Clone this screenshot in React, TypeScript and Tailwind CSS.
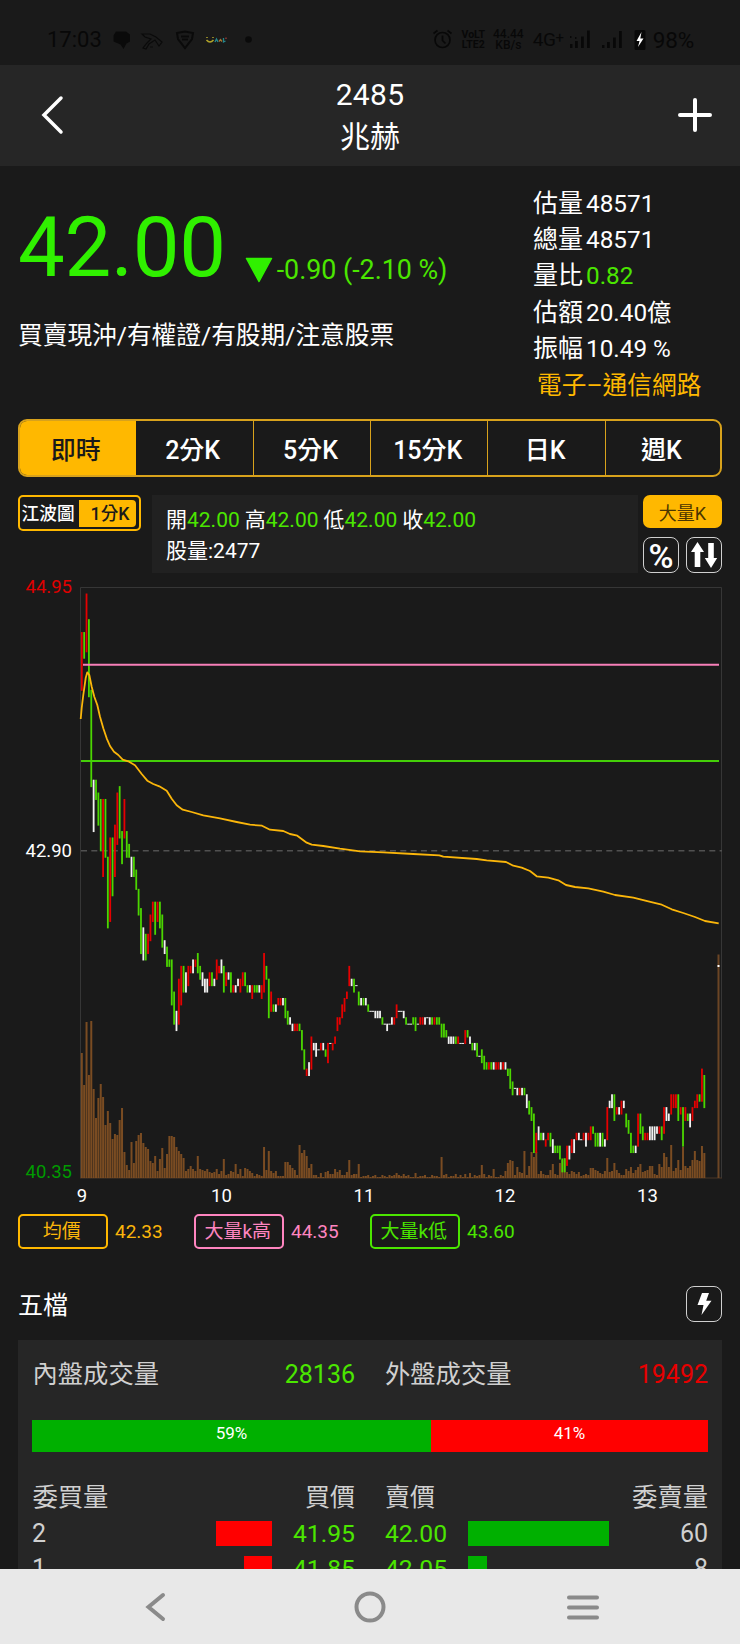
import React from "react";

const FONT = "font-['Roboto','Noto_Sans_CJK_TC',sans-serif]";

/* One entry per minute: colour, high tick and low tick below 44.95 (one tick = 0.05). */
const CANDLES = `
r7-16 g7-11 r1-10 g5-17 g16-31 w30-38 g30-33 g32-37 g33-41 r33-45
g33-42 g42-53 r39-52 g39-48 r37-45 r32-40 g31-39 g38-43 r33-39 g38-42
g40-42 w42-45 g42-45 g44-47 g47-51 g50-57 w53-58 g54-58 r54-57 r51-55
r49-52 g49-54 r49-52 g49-53 g51-56 w55-57 g56-59 g58-59 g58-65 g63-68
w66-69 r61-68 r59-65 g59-63 w60-63 r59-62 r59-60 w58-60 r58-59 g57-60
g59-61 w60-62 w61-63 w61-63 r60-62 g60-62 w61-62 r58-61 r59-60 w58-60
g59-63 r60-62 w60-61 g60-63 r62-63 w62-63 w61-62 r61-63 r60-62 g60-62
g62-63 w62-63 r62-64 g62-63 g62-63 w62-63 r62-64 r57-63 g59-61 g61-67
r63-66 g65-66 w65-66 r64-65 r64-65 w64-65 g64-67 g66-68 w67-68 w68-69
r68-69 r68-69 g68-69 g69-72 g72-75 r75-76 w74-76 r70-75 w71-72 w71-73
w72-72 r71-72 w71-72 g72-73 r71-74 w71-71 r71-72 r70-71 r67-69 r67-68
r65-67 r64-66 r63-64 r59-62 w61-62 g61-63 w62-62 g63-65 w64-65 g64-65
w64-65 g65-66 w66-66 w66-66 w66-67 w66-67 w66-67 g67-68 w68-68 w68-69
w68-68 w67-68 r67-68 r65-67 w66-66 w66-66 w66-67 g67-68 w68-68 w68-68
g67-68 g67-69 w68-68 r67-68 r67-68 w67-68 w67-67 w67-68 g67-68 r67-68
g67-68 g67-68 g68-70 g68-70 g69-70 w70-71 w70-71 w70-71 g70-71 r70-71
w71-71 w71-71 r69-71 g69-70 w70-71 g71-72 w71-72 g71-73 w73-73 g72-74
g73-75 g74-75 r74-75 g74-75 w74-75 r74-75 r74-75 w74-75 r74-75 w74-75
g75-76 g75-78 g77-79 w78-78 w78-79 r78-79 w78-79 g78-79 w79-81 g80-82
g81-83 g82-88 r85-88 w84-86 g85-86 w85-86 r86-87 r85-86 g85-87 w86-88
g87-88 g87-88 g87-89 g89-91 g89-91 r87-90 w87-89 r86-88 w86-88 r85-86
w85-86 w86-86 r85-86 w85-87 r85-86 r84-86 g84-85 g85-87 g85-87 w85-87
g85-87 w86-87 r81-86 w80-81 w79-81 g79-83 r81-82 w81-82 r80-82 w80-81
g82-84 g83-85 g85-88 g87-88 w87-88 r82-87 g82-85 g84-86 r85-86 r85-86
w84-86 w84-86 w84-86 w84-85 r84-85 g84-86 r81-85 w81-83 w82-83 r79-82
r79-81 r79-81 g79-83 r81-82 g81-87 r81-83 g82-83 w82-84 r81-83 r80-81
r79-81 g79-80 r75-80 g76-81`
  .trim()
  .split(/\s+/)
  .map((s) => {
    const [hi, lo] = s.slice(1).split("-").map(Number);
    return { tone: s[0], hi, lo };
  });

const VOLUMES = [
  125, 93, 156, 103, 157, 89, 60, 80, 94, 81, 53, 67, 55, 39, 44, 43, 58, 70, 26, 13,
  8, 36, 15, 37, 43, 45, 35, 31, 29, 17, 15, 22, 7, 19, 30, 10, 24, 42, 42, 41,
  31, 27, 24, 20, 7, 9, 12, 9, 7, 22, 9, 8, 7, 9, 6, 5, 6, 9, 4, 7,
  19, 3, 4, 7, 6, 14, 4, 9, 2, 10, 9, 7, 5, 2, 4, 3, 2, 31, 8, 27,
  7, 5, 7, 2, 2, 2, 16, 16, 13, 10, 8, 3, 33, 25, 28, 22, 10, 14, 3, 3,
  1, 5, 1, 6, 7, 4, 4, 9, 6, 8, 3, 3, 6, 18, 3, 4, 4, 14, 1, 2,
  2, 3, 1, 2, 3, 1, 1, 3, 2, 1, 3, 2, 3, 5, 3, 2, 4, 2, 3, 1,
  1, 5, 1, 2, 2, 3, 1, 1, 3, 2, 2, 1, 21, 3, 4, 1, 2, 2, 4, 1,
  3, 1, 4, 1, 5, 1, 3, 2, 3, 13, 4, 1, 3, 2, 9, 1, 1, 3, 2, 7,
  15, 18, 17, 3, 11, 6, 5, 27, 3, 12, 26, 21, 26, 4, 7, 4, 3, 3, 8, 14,
  4, 3, 15, 18, 20, 6, 4, 7, 6, 4, 6, 2, 3, 4, 3, 10, 10, 8, 7, 5,
  4, 7, 20, 6, 7, 15, 8, 5, 3, 3, 9, 7, 11, 5, 8, 11, 14, 6, 7, 8,
  12, 12, 4, 3, 14, 11, 25, 21, 11, 33, 7, 10, 18, 8, 31, 12, 10, 12, 18, 27,
  18, 17, 32, 25,
];

const TONES: Record<string, string> = { r: "#e60000", g: "#4bd600", w: "#f2f2f2" };

const AVERAGE =
  "80.7,719 81.7,708 83.3,695 85.7,678 87.3,672.3 89.3,675 91.7,686.7 94.3,696.7 97.3,705 100,716.7 103.3,728.3 106.7,738.3 110,746 114,751.7 118.3,755 122.7,759.7 128.3,761.3 135,765.3 141.7,774 147.3,780.7 153.3,784 159.3,786.3 166.7,790.7 171.7,798.7 176.7,805.3 182.7,809.7 191.7,812 203.3,815.3 220,818.3 236.7,822 250,824.7 262,825.7 270,829.7 283.3,831 290,834 297.3,835.7 306.7,842.7 311.7,844.7 323.3,846 340,848.7 360,851.3 383.3,852.3 413.3,854 439.3,855.3 443.3,856.7 476.7,859 486.7,860.3 506,862 513.3,865.7 521.7,867.7 530,871 536.7,876.3 548.3,877.7 558.3,880.3 566,885 575,887 588.3,888.3 603.3,891.7 615,895 633.3,897.7 648.3,901.3 660.7,904.3 671.7,909.3 683.3,913 695,917 705,921 718.7,923.3";

const minuteX = (i: number) => 81.8 + i * 2.367;
const tickY = (k: number) => 587.6 + k * 6.42;

function Chart() {
  const label = "font-['Roboto',sans-serif] text-[18.5px]";
  return (
    <svg className="block h-[637px] w-[740px] shrink-0" viewBox="0 573 740 637">
      <path d="M80.5 1178V587.5H721.5V1178" fill="none" stroke="#363636" strokeWidth="1" />
      <path d="M80 1178H722" stroke="#4a3626" strokeWidth="1" />
      <path d="M81 850.7H722" stroke="#505050" strokeWidth="1.6" strokeDasharray="6 4.3" />
      {VOLUMES.map((v, i) => (
        <rect key={i} x={minuteX(i) - 1} y={1178 - v} width="2" height={v} fill="#7a4c22" />
      ))}
      <rect x="717.5" y="954.5" width="2" height="223.5" fill="#6b4524" />
      {CANDLES.map((c, i) => (
        <rect
          key={i}
          x={minuteX(i) - (c.hi === c.lo ? 1.2 : 0.9)}
          y={tickY(c.hi) - 0.5}
          width={c.hi === c.lo ? 2.4 : 1.8}
          height={(c.lo - c.hi) * 6.42 + 1}
          fill={TONES[c.tone]}
        />
      ))}
      <rect x="717.5" y="965" width="2" height="2" fill="#fff" />
      <path d="M83 664.7H719" stroke="#f77fb9" strokeWidth="2" />
      <path d="M81 761H719" stroke="#44cf08" strokeWidth="2" />
      <polyline
        points={AVERAGE}
        fill="none"
        stroke="#fbb60a"
        strokeWidth="1.8"
        strokeLinejoin="round"
      />
      <g className={label} textAnchor="end">
        <text x="72" y="593" fill="#e00000">44.95</text>
        <text x="72" y="856.5" fill="#fff">42.90</text>
        <text x="72" y="1177.5" fill="#009a00">40.35</text>
      </g>
      <g className={label} textAnchor="middle" fill="#fff">
        <text x="82" y="1202">9</text>
        <text x="221.5" y="1202">10</text>
        <text x="364" y="1202">11</text>
        <text x="505" y="1202">12</text>
        <text x="647.5" y="1202">13</text>
      </g>
    </svg>
  );
}

function StatusBar() {
  return (
    <div className="flex h-[65px] shrink-0 items-start justify-between bg-[#1a1a1a] pt-[27px] pr-[46px] pl-[47px] text-[#080808]">
      <div className="flex h-[26px] items-center">
        <span className="w-[65px] text-[22px] leading-[26px]">17:03</span>
        <svg className="h-[26px] w-[160px]" viewBox="112 26 160 26">
          <path d="M116 30.500h10l4 3v7l-3.500 2-3 5.500-3-4.500-7-3v-6z" fill="#0a0a0a" />
          <path d="M142 33l8 0 6 3 6 5-3 4-4-6-6 4-3 5-3-1 4-5 4-4-6-2zM150 46h3" fill="none" stroke="#0a0a0a" strokeWidth="1.2" />
          <path d="M177 32l8-1.500 8 1.500-1 6-7 9-7-9z" fill="none" stroke="#0a0a0a" strokeWidth="2" />
          <path d="M181 35.500h8M182 38.500h6" stroke="#0a0a0a" strokeWidth="1.800" />
          <path d="M207 36v1m6-1v1M206.500 39q3.500 4 7 0" fill="none" stroke="#b3a52a" strokeWidth="1.500" />
          <path d="M215 41l1.500-3 1.500 3" fill="none" stroke="#25868c" strokeWidth="1.400" />
          <path d="M219 40.500l1.500-2 1.500 2" fill="none" stroke="#a6752d" strokeWidth="1.300" />
          <path d="M223.500 37v4l2-1" fill="none" stroke="#25868c" strokeWidth="1.300" />
          <path d="M226 36.500v1.500" stroke="#a33b35" strokeWidth="1.300" />
          <circle cx="248.500" cy="38.500" r="3.300" fill="#0a0a0a" />
        </svg>
      </div>
      <div className="flex h-[26px] items-center">
        <svg className="h-[26px] w-[21px]" viewBox="431 26 21 26" fill="none" stroke="#080808" strokeWidth="1.700">
          <circle cx="441.500" cy="39" r="7.500" />
          <path d="M441.500 34.500v5l3 3M432.500 32.500l4-3M450.500 32.500l-4-3" />
        </svg>
        <div className="ml-[8px] w-[25px] text-center text-[10.500px] leading-[10px] font-bold">
          <div>VoLT</div>
          <div>LTE2</div>
        </div>
        <div className="ml-[7px] w-[31px] text-center text-[12px] leading-[11.500px] font-medium">
          <div>44.44</div>
          <div>KB/s</div>
        </div>
        <span className="ml-[9px] w-[35px] text-[19px] leading-[26px] tracking-[-0.5px]">
          4G<span className="relative top-[-3px] text-[15px]">+</span>
        </span>
        <svg className="h-[26px] w-[82px]" viewBox="568 27 82 26" fill="#080808">
          <path d="M570 44h2.500v4H570zM575 41h2.800v7H575zM581 36.500h2.800V48H581zM587 30.500h2.800V48H587zM570 36h1.500v2H570zM575 37h1.500v2H575zM602 45h2.500v3H602zM607 42h2.800v6H607zM613 37.500h2.800V48H613zM619 31h2.800v17H619z" />
          <rect x="634.500" y="30" width="11" height="20" rx="1.500" />
          <path d="M641.500 32l-5 9h3l-1.500 6 5.500-8.500h-3.200z" fill="#fff" />
        </svg>
        <span className="ml-[3px] text-[22.500px] leading-[26px] tracking-[-0.200px]">98%</span>
      </div>
    </div>
  );
}

function Stat({ label, value, tone = "text-white" }: { label: string; value: string; tone?: string }) {
  return (
    <div className="flex h-[36.400px] items-center gap-[3px] leading-[36px]">
      <span className="text-[25px]">{label}</span>
      <span className={"text-[24.300px] " + tone}>{value}</span>
    </div>
  );
}

function IconButton({ children }: { children: React.ReactNode }) {
  return (
    <div className="flex h-[36px] w-[36px] items-center justify-center rounded-[8px] border border-[#d0d0d0]">
      {children}
    </div>
  );
}

function Legend({ name, value, box, text }: { name: string; value: string; box: string; text: string }) {
  return (
    <div className={"flex w-[176px] items-center gap-[7.500px] text-[19px] " + text}>
      <div
        className={"flex h-[35px] w-[89.500px] items-center justify-center rounded-[5px] border-2 pt-[2px] pr-[2px] " + box}
      >
        {name}
      </div>
      <span className="pt-[2px]">{value}</span>
    </div>
  );
}

function DepthRow(p: { bid: string; bidW: string; bidPx: string; ask: string; askW: string; askPx: string }) {
  return (
    <div className="grid h-[35px] grid-cols-[323px_323px] gap-[30px]">
      <div className="flex items-center">
        <span className="flex-1 text-[#d0d0d0]">{p.bid}</span>
        <div className={"h-[25px] bg-[#ff0000] " + p.bidW} />
        <span className="w-[83px] text-right text-[24.700px] text-[#4be600]">{p.bidPx}</span>
      </div>
      <div className="flex items-center">
        <span className="w-[82.500px] text-[24.700px] text-[#4be600]">{p.askPx}</span>
        <div className={"h-[25px] bg-[#00b000] " + p.askW} />
        <span className="flex-1 text-right text-[#d0d0d0]">{p.ask}</span>
      </div>
    </div>
  );
}

const TABS = ["即時", "2分K", "5分K", "15分K", "日K", "週K"];
const OHLC = [["開", "42.00"], ["高", "42.00"], ["低", "42.00"], ["收", "42.00"]];

export default function App() {
  return (
    <div className={"flex h-[1644px] w-[740px] flex-col overflow-hidden bg-[#1a1a1a] text-white " + FONT}>
      <StatusBar />

      <header className="flex h-[100.500px] shrink-0 items-center justify-between bg-[#262626] pr-[27px] pl-[40px]">
        <svg className="h-[40px] w-[24px]" viewBox="0 0 24 40" fill="none" stroke="#fff" strokeWidth="3.500">
          <path d="M21 3L4 20L21 37" strokeLinecap="round" strokeLinejoin="miter" />
        </svg>
        <div className="mr-[1px] pt-[2px] text-center text-[30px] leading-[42px]">
          <div className="tracking-[0.300px]">2485</div>
          <div>兆赫</div>
        </div>
        <svg className="h-[36px] w-[36px]" viewBox="0 0 36 36" stroke="#fff" strokeWidth="4" strokeLinecap="round">
          <path d="M3 18H33M18 3V33" />
        </svg>
      </header>

      <section className="flex h-[253.500px] shrink-0 justify-between pl-[18px]">
        <div>
          <div className="flex h-[138px] items-end text-[#30f000]">
            <span className="mb-[28px] text-[83.300px] leading-[56px] tracking-[-0.300px]">42.00</span>
            <svg className="mb-[21px] ml-[19px] h-[26px] w-[28px]" viewBox="0 0 28 26">
              <path d="M1.500 1.500H26.500L14 24.500Z" fill="#30f000" stroke="#30f000" strokeWidth="1.500" strokeLinejoin="round" />
            </svg>
            <span className="mb-[16px] ml-[4px] text-[26.800px] leading-[36px] text-[#4be600]">-0.90 (-2.10 %)</span>
          </div>
          <div className="mt-[13px] text-[24.700px] leading-[38px]">買賣現沖/有權證/有股期/注意股票</div>
        </div>
        <div className="w-[207px] pt-[20px]">
          <Stat label="估量" value="48571" />
          <Stat label="總量" value="48571" />
          <Stat label="量比" value="0.82" tone="text-[#4be600]" />
          <Stat label="估額" value="20.40億" />
          <Stat label="振幅" value="10.49 %" />
          <div className="pl-[4px] text-[24.700px] leading-[37px] text-[#ffb800]">電子–通信網路</div>
        </div>
      </section>

      <nav className="mx-[18px] grid h-[58px] shrink-0 grid-cols-[115.500px_117.300px_117.300px_117.300px_117.300px_115.300px] overflow-hidden rounded-[9px] border-2 border-[#d8a21c] text-[25px] font-medium">
        {TABS.map((t, i) => (
          <div
            key={t}
            className={
              "flex items-center justify-center pt-[5px] " +
              (i === 0 ? "bg-[#ffb800] pr-[4px] text-[#1a1a1a]" : i === 1 ? "pr-[3px]" : "border-l-[1.500px] border-[#d8a21c] pr-[3px]")
            }
          >
            {t}
          </div>
        ))}
      </nav>

      <section className="mt-[18px] flex h-[78px] shrink-0 items-start px-[18px]">
        <div className="flex h-[36px] w-[122.500px] items-center rounded-[5px] border-2 border-[#ffb800] pl-[1.500px] text-[17.700px] font-medium">
          <span className="w-[57px] pt-[3px]">江波圖</span>
          <span className="flex h-[27px] w-[57px] items-center justify-end rounded-r-[4px] bg-[#ffb800] pt-[3px] pr-[6px] text-[#1a1a1a]">1分K</span>
        </div>
        <div className="ml-[11.500px] h-[78px] w-[486px] bg-[#212121] pt-[10px] pl-[14px] text-[21px] leading-[31px]">
          <div className="flex gap-[5px]">
            {OHLC.map(([k, v]) => (
              <span key={k}>
                {k}
                <span className="text-[#4be600]">{v}</span>
              </span>
            ))}
          </div>
          <div>股量:2477</div>
        </div>
        <div className="ml-[5px] flex w-[79px] flex-col gap-[9px]">
          <div className="flex h-[33px] items-center justify-center rounded-[7px] bg-[#ffb800] pt-[3px] text-[18px] text-[#4a3500]">大量K</div>
          <div className="flex justify-between">
            <IconButton>
              <span className="pt-[2px] text-[34px] leading-[34px] font-medium">%</span>
            </IconButton>
            <IconButton>
              <svg className="h-[28px] w-[28px]" viewBox="0 0 28 28" fill="#fff">
                <path d="M7.500 1L14 11H10.300V26H4.700V11H1ZM21 27L14.800 17H18.200V2H23.800V17H27.200Z" />
              </svg>
            </IconButton>
          </div>
        </div>
      </section>

      <Chart />

      <section className="mt-[3px] flex h-[36px] shrink-0 items-center pl-[18px]">
        <Legend name="均價" value="42.33" box="border-[#ffb800]" text="text-[#fbb60a]" />
        <Legend name="大量k高" value="44.35" box="border-[#ff85c0]" text="text-[#ff85c0]" />
        <Legend name="大量k低" value="43.60" box="border-[#4be600]" text="text-[#4be600]" />
      </section>

      <section className="mt-[37px] flex h-[36px] shrink-0 items-center justify-between px-[18px]">
        <span className="pt-[4px] text-[25px]">五檔</span>
        <IconButton>
          <svg className="h-[24px] w-[20px]" viewBox="0 0 20 24" fill="#fff">
            <path d="M8 1H15L12.200 8.800H17.500L7.500 23L9.500 13H3.500Z" />
          </svg>
        </IconButton>
      </section>

      <section className="mx-[18px] mt-[18px] h-[228.500px] shrink-0 overflow-hidden bg-[#262626] px-[14px] text-[25px] text-[#d0d0d0]">
        <div className="mt-[15px] grid h-[38px] grid-cols-[323px_323px] gap-[30px]">
          <div className="flex items-center justify-between">
            <span className="pt-[1px] pl-[0.500px] text-[25.300px]">內盤成交量</span>
            <span className="text-[#4be600]">28136</span>
          </div>
          <div className="flex items-center justify-between">
            <span className="pt-[1px] text-[25.300px]">外盤成交量</span>
            <span className="text-[#e60000]">19492</span>
          </div>
        </div>
        <div className="mt-[27px] flex h-[32px] text-center text-[17px] leading-[27px] text-white">
          <div className="w-[59%] bg-[#00b000]">59%</div>
          <div className="w-[41%] bg-[#ff0000]">41%</div>
        </div>
        <div className="mt-[27px] grid h-[38px] grid-cols-[323px_323px] gap-[30px]">
          <div className="flex items-center justify-between">
            <span className="pl-[0.500px] text-[25.300px]">委買量</span>
            <span>買價</span>
          </div>
          <div className="flex items-center justify-between">
            <span>賣價</span>
            <span className="text-[25.300px]">委賣量</span>
          </div>
        </div>
        <div className="mt-[-2px]">
          <DepthRow bid="2" bidW="w-[56px]" bidPx="41.95" askPx="42.00" askW="w-[141px]" ask="60" />
          <DepthRow bid="1" bidW="w-[28px]" bidPx="41.85" askPx="42.05" askW="w-[19px]" ask="8" />
        </div>
      </section>

      <footer className="h-[76px] shrink-0 bg-[#e8e8e8]">
        <svg className="block h-[76px] w-[740px]" viewBox="0 1568.500 740 76" fill="none" stroke="#8a8a8a" strokeWidth="4" strokeLinecap="round">
          <path d="M163 1594.500L148.500 1606.500L163 1618.500" />
          <circle cx="370" cy="1606.500" r="13.500" />
          <path d="M569 1597H597M569 1607H597M569 1617H597" />
        </svg>
      </footer>
    </div>
  );
}
